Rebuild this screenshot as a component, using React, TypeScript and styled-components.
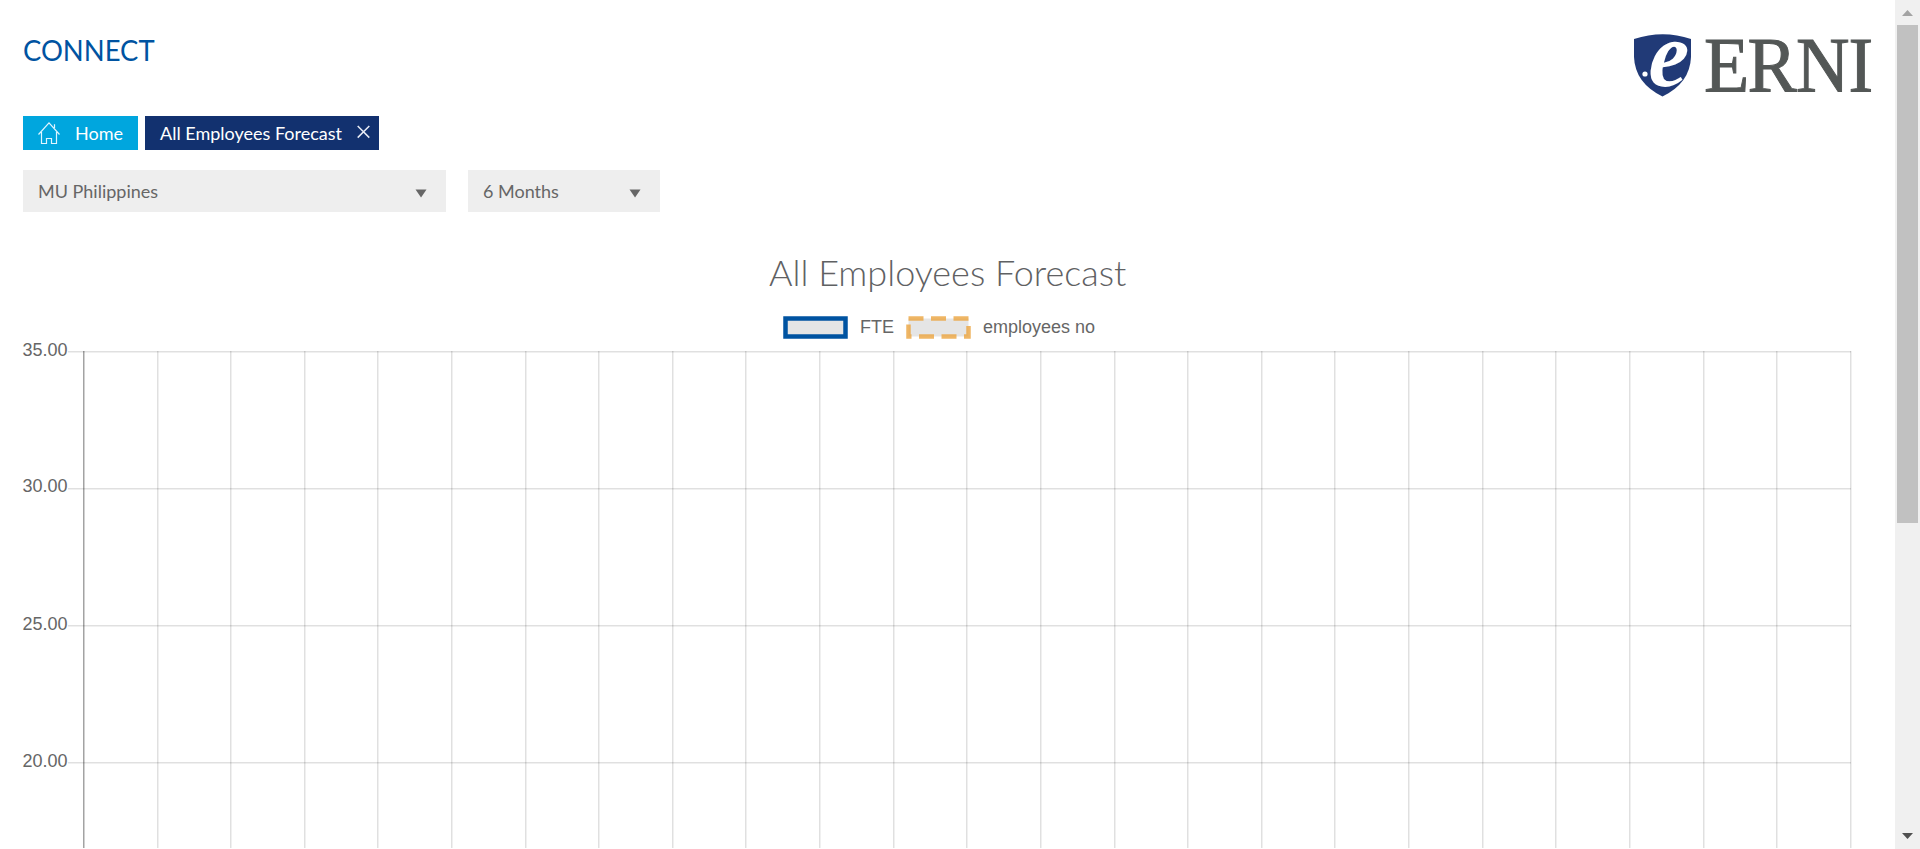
import React from 'react';
import styled, { createGlobalStyle } from 'styled-components';

const GlobalStyle = createGlobalStyle`
  * { box-sizing: border-box; }
  body { margin: 0; background: #fff; overflow: hidden; font-family: Lato, "Open Sans", sans-serif; color: #666; }
`;

const Window = styled.div`
  display: flex;
  width: 100vw;
  height: 849px;
  overflow: hidden;
`;

const Page = styled.main`
  flex: 1;
  min-width: 0;
  display: flex;
  flex-direction: column;
`;

const Header = styled.header`
  display: flex;
  justify-content: space-between;
  height: 116px;
  padding: 0 22px 0 23px;
`;

const Text = styled.span<{ $size: number; $stretch?: number }>`
  display: block;
  white-space: nowrap;
  font-size: ${p => p.$size}px;
  transform: scaleX(${p => p.$stretch ?? 1});
  transform-origin: 0 50%;
`;

const Brand = styled.div`
  padding-top: 32px;
  line-height: 36px;
  color: #0053a1;
`;

const LogoMark = styled.svg`
  display: block;
  overflow: visible;
  margin-top: 6px;
`;

const TabBar = styled.nav`
  display: flex;
  gap: 7px;
  height: 34px;
  margin-left: 23px;
`;

const Tab = styled.a<{ $width: number; $active?: boolean }>`
  display: flex;
  align-items: center;
  width: ${p => p.$width}px;
  padding-left: 15px;
  color: #fff;
  line-height: 34px;
  background: ${p => (p.$active ? '#12316f' : '#00a6de')};
`;

const TabLabel = styled.span<{ $width: number }>`
  width: ${p => p.$width}px;
`;

const HomeIcon = styled.svg`
  margin-right: 15px;
`;

const Filters = styled.div`
  display: flex;
  gap: 22px;
  margin: 20px 0 0 23px;
`;

const Select = styled.div<{ $width: number }>`
  display: flex;
  justify-content: space-between;
  align-items: center;
  width: ${p => p.$width}px;
  height: 42px;
  padding: 0 19px 0 15px;
  background: #eee;
  line-height: 42px;
`;

const Arrow = styled.svg`
  display: block;
  margin-top: 4px;
`;

const Title = styled.h1`
  width: 358px;
  margin: 36px 0 0 769px;
  height: 48px;
  line-height: 48px;
  font-weight: 300;
  color: #5f6163;
`;

const Legend = styled.div`
  display: flex;
  align-items: center;
  height: 24px;
  margin: 19px 0 1px 783px;
  font: 18px/24px "Liberation Sans", sans-serif;
`;

const LegendLabel = styled.span<{ $width: number }>`
  width: ${p => p.$width}px;
  margin-left: 11px;
  white-space: nowrap;
`;

const Chart = styled.svg`
  display: block;
  flex: none;
  font: 18px "Liberation Sans", sans-serif;
`;

const ScrollTrack = styled.div`
  display: flex;
  flex-direction: column;
  justify-content: space-between;
  align-items: center;
  width: 25px;
  height: 849px;
  background: #f0f0f0;
`;

const ScrollThumb = styled.div`
  width: 21px;
  height: 498px;
  background: #c1c1c1;
  margin-bottom: auto;
`;

const ScrollButton = styled.svg`
  display: block;
`;

const LETTER_STRETCH = 0.95;
const letterStarts = [1704, 1747.5, 1796, 1848.5].map(x => x / LETTER_STRETCH).join(' ');

const Logo = () => (
  <LogoMark width="245" height="108" viewBox="1628 6 245 108">
    <path d="M1634 39 Q1663 29.500 1691 39 V57 Q1690 83 1662.500 96.500 Q1635 83 1634 57 Z" fill="#213a77" />
    <circle cx="1645" cy="74" r="2.600" fill="#fff" />
    <text
      transform="translate(1647.500 86) skewX(-4) scale(.94 1)"
      fontFamily="Liberation Serif, serif"
      fontWeight="700"
      fontStyle="italic"
      fontSize="94"
      fill="#fff"
    >
      e
    </text>
    <text
      transform={`scale(${LETTER_STRETCH} 1)`}
      x={letterStarts}
      y="91"
      fontFamily="Liberation Serif, serif"
      fontSize="78"
      fill="#535756"
      stroke="#535756"
      strokeWidth="1"
    >
      ERNI
    </text>
  </LogoMark>
);

const DropArrow = () => (
  <Arrow width="12" height="9" viewBox="0 0 12 9">
    <path d="M.5 .5H11.500L6 8.500Z" fill="#666" />
  </Arrow>
);

const ticks = [
  { label: '35.00', y: 352, baseline: 357 },
  { label: '30.00', y: 489, baseline: 493 },
  { label: '25.00', y: 626, baseline: 631 },
  { label: '20.00', y: 763, baseline: 768 },
];
const columns = Array.from({ length: 24 }, (_, i) => Math.floor(83.4 + (i + 1) * 73.62));

const ForecastGrid = () => (
  <Chart width="1895" height="508" viewBox="0 341 1895 508" fill="#666" shapeRendering="crispEdges">
    {ticks.map(({ label, y, baseline }) => (
      <g key={label}>
        <text x="22.500" y={baseline}>{label}</text>
        <rect x="68" y={y} width="1783" height="1" fill="#000" fillOpacity=".12" />
        <rect x="68" y={y + 1} width="1783" height="1" fill="#000" fillOpacity=".06" />
      </g>
    ))}
    {columns.map(x => (
      <g key={x}>
        <rect x={x} y="352" width="1" height="497" fill="#000" fillOpacity=".12" />
        <rect x={x + 1} y="352" width="1" height="497" fill="#000" fillOpacity=".06" />
      </g>
    ))}
    <rect x="83" y="352" width="1" height="497" fill="#000" fillOpacity=".36" />
    <rect x="84" y="352" width="1" height="497" fill="#000" fillOpacity=".18" />
  </Chart>
);

export default function App() {
  return (
    <>
      <GlobalStyle />
      <Window>
        <Page>
          <Header>
            <Brand><Text $size={29} $stretch={0.945}>CONNECT</Text></Brand>
            <Logo />
          </Header>
          <TabBar>
            <Tab $width={115}>
              <HomeIcon width="22" height="24" viewBox="0 0 22 24" fill="none" stroke="#dff5ff" strokeWidth="1.200">
                <path d="M.5 13.500L11 1.800L21.500 13.500M16.500 7V3.200M3.500 11V22.500H8.500V17.500H13.500V22.500H18.500V11" />
              </HomeIcon>
              <TabLabel $width={48}><Text $size={18}>Home</Text></TabLabel>
            </Tab>
            <Tab $width={234} $active>
              <TabLabel $width={197}><Text $size={18}>All Employees Forecast</Text></TabLabel>
              <svg width="13" height="16" viewBox="0 0 13 16" stroke="#e8ecf5" strokeWidth="1.500">
                <path d="M.7 1L12.300 12.600M12.300 1L.7 12.600" />
              </svg>
            </Tab>
          </TabBar>
          <Filters>
            <Select $width={423}><Text $size={18}>MU Philippines</Text><DropArrow /></Select>
            <Select $width={192}><Text $size={18}>6 Months</Text><DropArrow /></Select>
          </Filters>
          <Title><Text $size={35} $stretch={1.028}>All Employees Forecast</Text></Title>
          <Legend>
            <svg width="66" height="24" viewBox="0 0 66 24">
              <rect x="2.500" y="3.500" width="60" height="18" fill="#e5e5e5" stroke="#0053a1" strokeWidth="4.500" />
            </svg>
            <LegendLabel $width={46}>FTE</LegendLabel>
            <svg width="66" height="24" viewBox="0 0 66 24">
              <rect x="2.500" y="3.500" width="60" height="18" fill="#e5e5e5" />
              <path d="M2.500 3.500H62.500V21.500H2.500Z" fill="none" stroke="#eba43f" strokeOpacity=".8" strokeWidth="4.500" strokeDasharray="15 7.500" />
            </svg>
            <LegendLabel $width={116}>employees no</LegendLabel>
          </Legend>
          <ForecastGrid />
        </Page>
        <ScrollTrack>
          <ScrollButton width="25" height="25" viewBox="0 0 25 25"><path d="M7 16H18L12.500 10Z" fill="#a3a3a3" /></ScrollButton>
          <ScrollThumb />
          <ScrollButton width="25" height="25" viewBox="0 0 25 25"><path d="M7 9H18L12.500 15Z" fill="#505050" /></ScrollButton>
        </ScrollTrack>
      </Window>
    </>
  );
}
